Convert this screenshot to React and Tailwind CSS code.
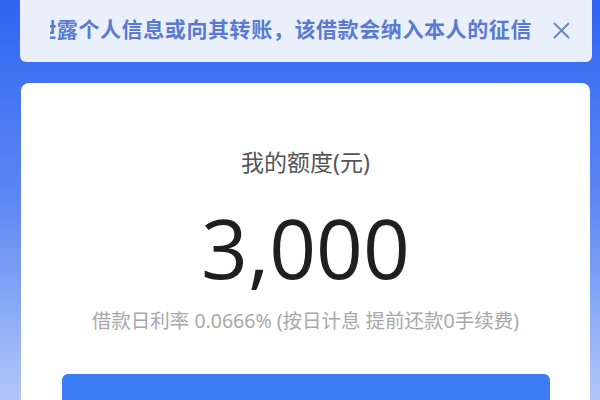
import React from "react";

export default function App() {
  return (
    <div
      className="w-[600px] h-[400px] overflow-hidden bg-gradient-to-b from-[#2f64f2] via-[#5d87f3] to-[#b3c6f6] pl-[20px] pr-[8px] flex flex-col gap-[21px]"
      style={{ fontFamily: '"Noto Sans", "Noto Sans CJK SC", sans-serif' }}
    >
      <div className="h-[64px] shrink-0 bg-[#e9effb] rounded-b-[6px] flex items-center pl-[30px] pr-[22px] -mt-[2px]">
        <div className="flex-1 overflow-hidden whitespace-nowrap flex justify-end">
          <span className="text-[21px] font-semibold text-[#5a7ad2] tracking-[0.6px]">
            泄露个人信息或向其转账，该借款会纳入本人的征信
          </span>
        </div>
        <svg className="ml-[21px] shrink-0" width="17" height="17" viewBox="0 0 17 17">
          <path d="M1.5 1.5 L15.5 15.5 M15.5 1.5 L1.5 15.5" stroke="#6f86c4" strokeWidth="2" strokeLinecap="round" />
        </svg>
      </div>
      <div className="flex-1 bg-white rounded-t-[8px] ml-[1px] mr-[2px] flex flex-col items-center">
        <div className="mt-[64px] text-[23px] leading-[30px] text-[#555555]">我的额度(元)</div>
        <div
          className="mt-[25px] text-[82px] leading-[90px] text-[#1f1f1f] font-normal"
          style={{ fontFamily: '"Open Sans", "Noto Sans", sans-serif' }}
        >
          3,000
        </div>
        <div className="mt-[16px] text-[19.5px] leading-[26px] text-[#a8a8a8] whitespace-nowrap">
          借款日利率 0.0666% (按日计息 提前还款0手续费)
        </div>
        <div className="mt-[40px] shrink-0 w-[488px] h-[50px] bg-[#3b7cf4] rounded-[6px]" />
      </div>
    </div>
  );
}
